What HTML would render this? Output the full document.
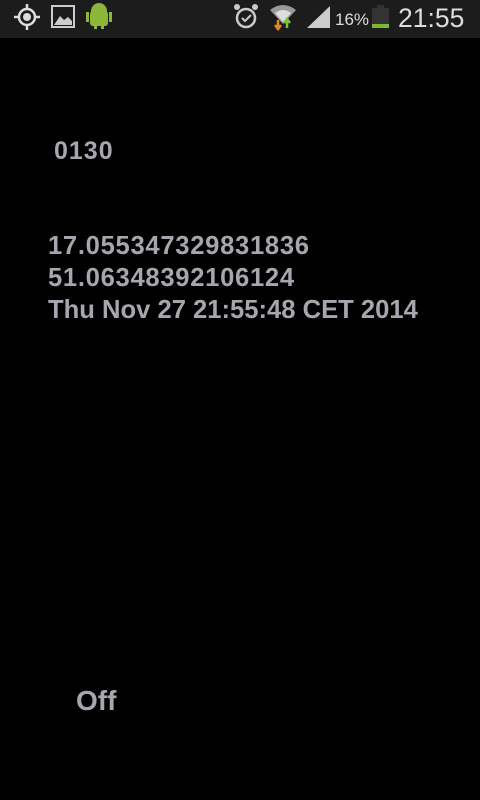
<!DOCTYPE html>
<html><head><meta charset="utf-8"><style>
body{margin:0;width:480px;height:800px;background:#000;overflow:hidden;position:relative;font-family:"Liberation Sans",sans-serif}
#sb{position:absolute;left:0;top:0;width:480px;height:38px;background:#1c1c1c}
.t{position:absolute;color:#a6a6ae;font-weight:bold;white-space:nowrap}
.n{letter-spacing:0.7px}
</style></head><body>
<div id="sb">
<svg width="480" height="38" style="position:absolute;left:0;top:0">
<g stroke="#ddd" fill="none" stroke-width="2.5"><circle cx="27" cy="17" r="8"/><line x1="14" y1="17" x2="19" y2="17"/><line x1="35" y1="17" x2="40" y2="17"/><line x1="27" y1="4" x2="27" y2="9"/><line x1="27" y1="25" x2="27" y2="30"/></g>
<circle cx="27" cy="17" r="4" fill="#ddd"/>
<rect x="52" y="6" width="22" height="21" fill="none" stroke="#ccc" stroke-width="2"/>
<path d="M54 25 L60 16 L64 20 L68 17 L72 21 L72 25Z" fill="#ccc"/>
<rect x="90" y="11" width="18" height="15" rx="3" fill="#8bb63a"/><circle cx="99" cy="11" r="8" fill="#8bb63a"/><rect x="86" y="12" width="3" height="10" fill="#8bb63a"/><rect x="109" y="12" width="3" height="10" fill="#8bb63a"/><rect x="94" y="24" width="3" height="5" fill="#8bb63a"/><rect x="101" y="24" width="3" height="5" fill="#8bb63a"/>
<circle cx="246" cy="18" r="9" fill="none" stroke="#ccc" stroke-width="2.5"/><path d="M242 18 L245 21 L251 15" stroke="#ccc" stroke-width="2" fill="none"/><circle cx="237" cy="7" r="3" fill="#ccc"/><circle cx="255" cy="7" r="3" fill="#ccc"/>
<path d="M270 10 Q283 0 296 10 L283 24Z" fill="#999"/><path d="M275 13 Q283 7 291 13 L283 22Z" fill="#ddd"/>
<path d="M278 20 v8 M275 25 l3 4 l3 -4" stroke="#e08a1e" stroke-width="2.5" fill="none"/><path d="M287 28 v-8 M284 23 l3 -4 l3 4" stroke="#7cc040" stroke-width="2.5" fill="none"/>
<path d="M307 28 L330 6 L330 28Z" fill="#ccc"/>
<text x="335" y="25" fill="#ddd" font-size="17" font-family="Liberation Sans">16%</text>
<rect x="372" y="8" width="17" height="20" fill="#333"/><rect x="377" y="5" width="7" height="3" fill="#333"/><rect x="372" y="24" width="17" height="4" fill="#7cb82f"/>
<text x="398" y="27" fill="#ddd" font-size="26.5" font-family="Liberation Sans">21:55</text>
</svg>
</div>
<div class="t" style="left:54px;top:137px;font-size:25px;letter-spacing:1px">0130</div>
<div class="t" style="left:48px;top:230px;font-size:25.6px;line-height:32px"><span class="n">17.055347329831836</span><br><span class="n">51.06348392106124</span><br>Thu Nov 27 21:55:48 CET 2014</div>
<div class="t" style="left:76px;top:685px;font-size:28px">Off</div>
</body></html>
